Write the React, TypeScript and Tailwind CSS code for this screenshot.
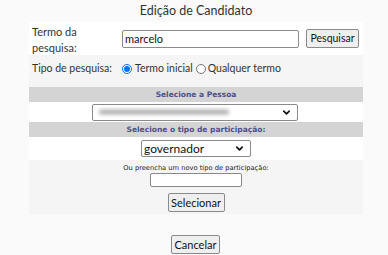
import { ChevronDown } from 'lucide-react';

const ui = { fontFamily: "Lato, 'Noto Sans', Arial, sans-serif" };
const verdana = { fontFamily: "'DejaVu Sans', Verdana, sans-serif" };

function Radio({ checked }: { checked?: boolean }) {
  return (
    <span
      className={`inline-flex w-[10px] h-[10px] rounded-full items-center justify-center border ${
        checked ? 'border-[#0075ff] bg-white' : 'border-[#767676] bg-white'
      }`}
    >
      {checked && <span className="w-[6px] h-[6px] rounded-full bg-[#0075ff]"></span>}
    </span>
  );
}

function Bar({ children }: { children: React.ReactNode }) {
  return (
    <div
      className="h-[15px] bg-[#d4d4d4] flex items-center justify-center text-[7.5px] font-bold text-[#4e4e88] whitespace-nowrap"
      style={verdana}
    >
      {children}
    </div>
  );
}

export default function App() {
  return (
    <div className="w-[388px] h-[255px] bg-[#fafafa] text-[#222] overflow-hidden" style={ui}>
      {/* Title */}
      <div className="h-[22px] flex items-center justify-center text-[12.5px] text-[#333] pl-[4px]">
        Edição de Candidato
      </div>

      {/* Panel */}
      <div className="ml-[29px] w-[334px] bg-[#f5f5f5]">
        <div className="h-[33px] bg-white flex items-center">
          <div className="w-[93px] pl-[3px] pt-[3px] text-[11px] leading-[16px] text-[#333] whitespace-nowrap">
            Termo da
            <br />
            pesquisa:
          </div>
          <div className="w-[177px] h-[18px] border border-[#8a8a8a] rounded-[2px] bg-white text-[11px] leading-[16px] pl-[2px] text-[#111]">
            marcelo
          </div>
          <button className="ml-[7px] w-[53px] h-[19px] px-0 border border-[#8a8a8a] rounded-[2px] bg-[#efefef] text-[10.5px] leading-[17px] text-[#111] whitespace-nowrap">
            Pesquisar
          </button>
        </div>

        <div className="h-[27px] flex items-center text-[10.5px] text-[#333] whitespace-nowrap">
          <div className="w-[93px] pl-[3px]">Tipo de pesquisa:</div>
          <Radio checked />
          <span className="ml-[3px]">Termo inicial</span>
          <span className="ml-[3px] flex"><Radio /></span>
          <span className="ml-[2px]">Qualquer termo</span>
        </div>

        <div className="h-[5px]"></div>
        <Bar>Selecione a Pessoa</Bar>

        <div className="h-[20px] bg-white flex items-center justify-center">
          <div className="w-[206px] h-[17px] border border-[#8a8a8a] rounded-[2px] bg-white flex items-center justify-between pr-[5px] ml-[-2px]">
            <div className="ml-[6px] w-[130px] h-[4px] bg-[#9a9a9a] rounded-full blur-[2px]"></div>
            <ChevronDown size={11} strokeWidth={3.5} className="text-[#111]" />
          </div>
        </div>

        <Bar>Selecione o tipo de participação:</Bar>

        <div className="h-[23px] bg-white flex items-center justify-center">
          <div className="w-[110px] h-[17px] border border-[#8a8a8a] rounded-[2px] bg-white flex items-center justify-between pr-[5px] pl-[2px] text-[12px] text-[#111]">
            <span className="leading-[15px]">governador</span>
            <ChevronDown size={11} strokeWidth={3.5} className="text-[#111]" />
          </div>
        </div>

        <div className="flex flex-col items-center pt-[4px] pb-[2px]">
          <div className="h-[8px] text-[6.7px] leading-[8px] text-[#222] whitespace-nowrap" style={verdana}>
            Ou preencha um novo tipo de participação:
          </div>
          <div className="mt-[1px] w-[92px] h-[14px] border border-[#8a8a8a] rounded-[2px] bg-white"></div>
          <button className="mt-[6px] w-[57px] h-[19px] px-0 border border-[#8a8a8a] rounded-[2px] bg-[#efefef] text-[11px] leading-[17px] text-[#111] whitespace-nowrap">
            Selecionar
          </button>
        </div>
      </div>

      <div className="flex justify-center mt-[21px] pl-[3px]">
        <button className="w-[49px] h-[19px] px-0 border border-[#8a8a8a] rounded-[2px] bg-[#efefef] text-[11px] leading-[17px] text-[#111] whitespace-nowrap">
          Cancelar
        </button>
      </div>
    </div>
  );
}
